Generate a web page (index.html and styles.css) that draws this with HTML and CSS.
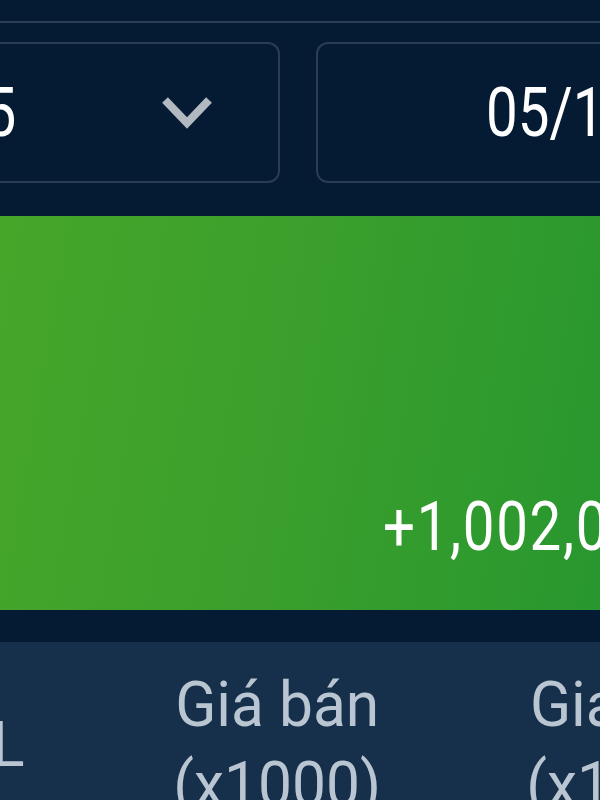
FILE: index.html
```html
<!DOCTYPE html>
<html lang="vi">
<head>
<meta charset="utf-8">
<title>Lãi lỗ</title>
<link rel="stylesheet" href="styles.css">
</head>
<body>
<div class="page">
  <div class="topbar"></div>
  <div class="filters">
    <div class="select">
      <span class="select-value">5</span>
      <svg class="chevron" width="52" height="36" viewBox="0 0 52 36" aria-hidden="true">
        <path d="M4 5 L26 28 L48 5" fill="none" stroke="#b1b8c0" stroke-width="8" stroke-linejoin="miter"/>
      </svg>
    </div>
    <div class="datebox">
      <span class="date-value">05/12/2024</span>
    </div>
  </div>
  <div class="card">
    <span class="card-value">+1,002,000</span>
  </div>
  <div class="gap"></div>
  <div class="thead">
    <div class="th th-first"><span>KL</span></div>
    <div class="th th-sell"><span>Giá bán<br>(x1000)</span></div>
    <div class="th th-cost"><span>Giá vốn<br>(x1000)</span></div>
  </div>
</div>
</body>
</html>
```

FILE: styles.css
```css
html, body {
  margin: 0;
  padding: 0;
  background: #041b33;
}
body {
  width: 600px;
  height: 800px;
  overflow: hidden;
  font-family: Roboto, "Liberation Sans", sans-serif;
}
.page {
  width: 600px;
  display: flex;
  flex-direction: column;
}
.topbar {
  height: 21px;
  border-bottom: 2px solid #2b3f58;
}
.filters {
  display: flex;
  gap: 36px;
  margin-top: 19px;
  height: 141px;
}
.select, .datebox {
  flex: none;
  box-sizing: border-box;
  height: 141px;
  border: 2px solid #2a3d55;
  border-radius: 12px;
  display: flex;
  align-items: center;
}
.select {
  width: 400px;
  margin-left: -120px;
  padding-left: 96px;
  padding-right: 65px;
  justify-content: space-between;
}
.select-value, .date-value, .card-value {
  color: #ffffff;
  font-size: 68px;
  line-height: 68px;
  display: inline-block;
  white-space: nowrap;
  transform: scaleX(0.83);
}
.select-value {
  transform-origin: right center;
}
.date-value {
  transform-origin: left center;
}
.chevron {
  display: block;
  flex: none;
}
.datebox {
  width: 400px;
  padding-left: 168px;
}
.card {
  margin-top: 33px;
  height: 394px;
  box-sizing: border-box;
  background: linear-gradient(100deg, #46a62a 0%, #3a9f2c 50%, #28972f 100%);
  display: flex;
  align-items: flex-end;
  padding-left: 383px;
  padding-bottom: 49px;
}
.card-value {
  transform-origin: left center;
  letter-spacing: 2px;
}
.gap {
  height: 32px;
}
.thead {
  height: 170px;
  background: #162f4a;
  display: flex;
  align-items: flex-start;
  padding-top: 23px;
  box-sizing: border-box;
}
.th {
  flex: none;
  color: #b9c5d1;
  font-size: 63px;
  line-height: 80px;
  height: 160px;
  display: flex;
  align-items: center;
  white-space: nowrap;
}
.th span {
  display: inline-block;
  transform: scaleX(0.96);
}
.th-first {
  width: 200px;
  margin-left: -176px;
  justify-content: flex-end;
}
.th-first span {
  transform-origin: right center;
}
.th-sell {
  width: 506px;
  justify-content: center;
  text-align: center;
}
.th-cost {
  width: 200px;
  justify-content: center;
  text-align: center;
}
```
